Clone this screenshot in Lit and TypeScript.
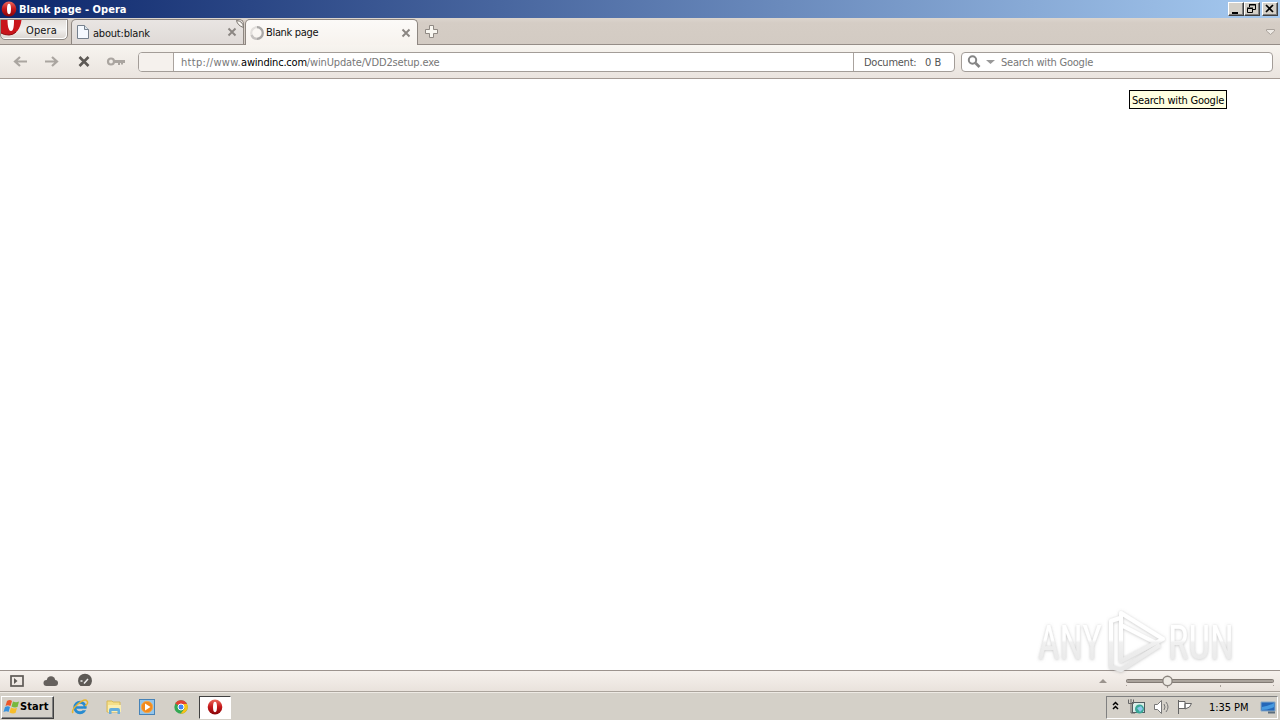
import { LitElement, html, css, svg } from "lit";
import { customElement } from "lit/decorators.js";

const operaMark = (id: string) => svg`
  <defs><linearGradient id=${id} x2="0" y2="1"><stop stop-color="#ee6a5c"/><stop offset=".5" stop-color="#c4171a"/><stop offset="1" stop-color="#860508"/></linearGradient></defs>
  <ellipse cx="8" cy="8" rx="7.3" ry="7.6" fill="url(#${id})"/>
  <ellipse cx="8" cy="8" rx="2" ry="5.2" fill="#fff"/>`;

@customElement("app-root")
export class AppRoot extends LitElement {
  static styles = css`
    :host { display: flex; flex-direction: column; width: 1280px; height: 720px; overflow: hidden; background: #fff; color: #111; font: 11px/14px "DejaVu Sans Condensed", "DejaVu Sans", sans-serif; font-stretch: condensed; white-space: nowrap; }
    * { box-sizing: border-box; }
    svg { display: block; flex: none; overflow: visible; }
    .title { height: 18px; flex: none; display: flex; align-items: center; padding: 0 2px 0 1px; background: linear-gradient(90deg, #0c266b, #a6caf0); color: #fff; }
    .title-text { font-weight: bold; margin-left: 2px; flex: 1; padding-top: 1px; letter-spacing: .03px; }
    .wbtn { width: 16px; height: 14px; background: #d4d0c8; border: 1px solid; border-color: #fff #404040 #404040 #fff; box-shadow: inset -1px -1px #808080; }
    .close { margin-left: 2px; }
    .tabs { height: 27px; flex: none; display: flex; background: linear-gradient(#dcd5ce, #d5cdc5 5px, #d3cbc3); border-bottom: 1px solid #958d87; }
    .menu { width: 68px; height: 21px; margin-top: 1px; display: flex; border: 1px solid #8f8984; border-radius: 0 0 5px 5px; background: linear-gradient(#e4e0dc, #f1efed 50%, #d9d4cf); box-shadow: inset -1px -1px #fff; }
    .menu-text { margin: 4px 0 0 4px; letter-spacing: .1px; }
    .tab { position: relative; display: flex; align-items: center; height: 26px; border: 1px solid #8e8781; border-bottom: 0; border-radius: 5px 5px 0 0; margin-top: 1px; }
    .inactive { width: 173px; margin-left: 3px; padding: 0 6px 0 5px; background: linear-gradient(#e9e5e3, #dfdad7); height: 25px; }
    .active { width: 173px; margin-left: 1px; padding: 1px 6px 0 4px; height: 26px; margin-bottom: -1px; align-items: flex-start; background: linear-gradient(#fcfaf8, #f7f3ee); }
    .active svg { margin-top: 5px; }
    .active .cross { margin-top: 7px; }
    .tab-text { flex: 1; padding-top: 3px; }
    .active .tab-text { padding-top: 5px; }
    .t1 { margin-left: 4px; letter-spacing: -.2px; }
    .t2 { margin-left: 2px; letter-spacing: -.33px; }
    .curl { position: absolute; right: -1px; top: 0; }
    .plus { margin: 7px 0 0 7px; }
    .down { margin: 11px 5px 0 auto; }
    .bar { height: 34px; flex: none; display: flex; padding: 7px 7px 0 13px; background: linear-gradient(#f7f4ef, #eae4df); border-bottom: 1px solid #a59b95; }
    .nav { margin-top: 3px; width: 125px; flex: none; }
    .address { width: 817px; height: 20px; display: flex; border: 1px solid #a39d98; border-radius: 4px; background: #fff; overflow: hidden; color: #777; }
    .badge { width: 35px; border-right: 1px solid #aaa39e; background: #f5f1ed; }
    .url { flex: 1; padding: 3px 0 0 7px; letter-spacing: -.15px; }
    .scheme { letter-spacing: .3px; }
    .host { color: #000; letter-spacing: -.2px; }
    .doc { width: 101px; border-left: 1px solid #aaa39e; padding: 3px 0 0 10px; color: #555; display: flex; }
    .doc-label { width: 61px; letter-spacing: -.25px; }
    .search { width: 312px; height: 20px; margin-left: 6px; display: flex; border: 1px solid #a39d98; border-radius: 4px; background: #fff; color: #777; padding-left: 5px; }
    .search-text { margin: 3px 0 0 5px; letter-spacing: -.23px; }
    .page { position: relative; flex: 1; background: #fff; }
    .tip { position: absolute; left: 1129px; top: 11px; width: 98px; height: 19px; border: 1px solid #000; background: #ffffe1; color: #000; padding: 3px 0 0 2px; letter-spacing: -.23px; }
    .mark { position: absolute; left: 1030px; top: 525px; font-family: Roboto, sans-serif; }
    .status { height: 22px; flex: none; display: flex; align-items: center; border-top: 1px solid #9c938e; border-bottom: 1px solid #aaa39c; background: linear-gradient(#f6f1ed, #e9e2dc); padding-left: 9px; }
    .zoom { margin-left: auto; }
    .task { height: 28px; flex: none; display: flex; align-items: center; background: #d4d0c8; border-top: 1px solid #eeeae4; padding: 2px 2px 1px 1px; }
    .start { width: 53px; height: 23px; display: flex; align-items: center; border: 1px solid; border-color: #fff #404040 #404040 #fff; box-shadow: inset -1px -1px #808080; padding-left: 1px; font-weight: bold; color: #000; letter-spacing: .1px; }
    .launch { margin-left: 17.5px; }
    .launch.first { margin-left: 18px; }
    .current { width: 32px; height: 23px; margin-left: 10px; padding: 2px 0 0 7px; border: 1px solid; border-color: #404040 #fff #fff #404040; background: #fff; }
    .tray { margin-left: auto; width: 172px; height: 23px; display: flex; align-items: center; border: 1px solid; border-color: #808080 #fff #fff #808080; color: #000; }
    .clock { width: 45px; margin-left: 12px; letter-spacing: -.05px; padding-top: 1px; }
    .desk { margin-left: 6px; }
  `;

  private cross() {
    return html`<svg class="cross" width="10" height="10"><path d="m1.500 1.500 7 7m0-7-7 7" stroke="#8b8682" stroke-width="1.900"/></svg>`;
  }

  render() {
    return html`
      <div class="title">
        <svg width="16" height="16" viewBox="0 0 16 16">${operaMark("a")}</svg>
        <span class="title-text">Blank page - Opera</span>
        <div class="wbtn"><svg width="14" height="12"><path d="M3 9h6v2H3z"/></svg></div>
        <div class="wbtn"><svg width="14" height="12"><path d="M4.500 4V1.500h6v5H8M4 2h7M2.500 5.500h5v4h-5zM2 5h6" fill="none" stroke="#000"/></svg></div>
        <div class="wbtn close"><svg width="14" height="12"><path d="m3 2 7 7m0-7-7 7" stroke="#000" stroke-width="1.700"/></svg></div>
      </div>
      <div class="tabs">
        <div class="menu">
          <svg width="21" height="18"><path d="M0 0h20.500c-1 8-5 15-12.500 15q-5 0-8-2z" fill="#c9151c"/><path d="M6.500 0h6.500c0 6-.5 11-3 11S6.500 6 6.500 0" fill="#fff"/><path d="M0 13q3 2 8 2 4 0 7-3" fill="none" stroke="#8e0b0f"/></svg>
          <span class="menu-text">Opera</span>
        </div>
        <div class="tab inactive">
          <svg width="12" height="14"><path d="M.5.5h7l4 4v9H.5z" fill="#f5f9ff" stroke="#75808d"/><path d="M7.500.5v4h4" fill="#dce5ed" stroke="#75808d"/></svg>
          <span class="tab-text t1">about:blank</span>${this.cross()}
          <svg class="curl" width="8" height="8"><path d="M.5.5q1 5 7 7Q7 1 .5.500" fill="#f8f6f2" stroke="#77716b"/></svg>
        </div>
        <div class="tab active">
          <svg width="14" height="14"><circle cx="7" cy="7" r="5.800" fill="none" stroke="#e2dfdc" stroke-width="2.200"/><path d="M7 1.200A5.800 5.800 0 0 1 7 12.800" fill="none" stroke="#aaa8a7" stroke-width="2.200"/><path d="M7 12.800A5.800 5.800 0 0 1 1.500 9" fill="none" stroke="#c5c2c0" stroke-width="2.200"/></svg>
          <span class="tab-text t2">Blank page</span>${this.cross()}
        </div>
        <svg class="plus" width="13" height="13"><path d="M4.500.5h4v4h4v4h-4v4h-4v-4h-4v-4h4z" fill="#f9f7f1" stroke="#8f8983"/></svg>
        <svg class="down" width="9" height="6"><path d="M.5.500h8v1.500L4.500 5.500.5 2z" fill="#eeeae5" stroke="#aaa39c"/></svg>
      </div>
      <div class="bar">
        <svg class="nav" width="125" height="14" fill="none">
          <path d="M14 6.500H2M7 2 2 6.500 7 11M32 6.500h12M39 2l5 4.500-5 4.500" stroke="#aaa5a0" stroke-width="2.200"/>
          <path d="m66.500 2 9 9m0-9-9 9" stroke="#5d5955" stroke-width="2.600"/>
          <circle cx="98" cy="6.500" r="3" stroke="#aaa5a0" stroke-width="2.200"/><path d="M101 6.500h11" stroke="#aaa5a0" stroke-width="3"/><path d="M106 7v3M109 7v2.500" stroke="#aaa5a0" stroke-width="2"/>
        </svg>
        <div class="address">
          <div class="badge"></div>
          <div class="url"><span class="scheme">http://www.</span><span class="host">awindinc.com</span>/winUpdate/VDD2setup.exe</div>
          <div class="doc"><span class="doc-label">Document:</span><span>0 B</span></div>
        </div>
        <div class="search">
          <svg width="29" height="18"><circle cx="5.500" cy="7" r="3.700" fill="none" stroke="#858585" stroke-width="2"/><path d="m8.500 10 4 4" stroke="#858585" stroke-width="2.600"/><path d="M19 7h9l-4.500 4z" fill="#999"/></svg>
          <span class="search-text">Search with Google</span>
        </div>
      </div>
      <div class="page">
        <div class="tip">Search with Google</div>
        <svg class="mark" width="220" height="76" viewBox="0 0 220 76">
          <defs>
            <filter id="shade" x="-10%" y="-10%" width="120%" height="130%"><feDropShadow dx="0" dy="0.500" stdDeviation="1.700" flood-color="#888" flood-opacity=".5"/></filter>
            <linearGradient id="fade" x1="0" y1="10" x2="0" y2="62" gradientUnits="userSpaceOnUse"><stop offset=".5" stop-color="#fff"/><stop offset=".55" stop-color="#f0f0f0"/><stop offset="1" stop-color="#e8e8e8"/></linearGradient>
          </defs>
          <g filter="url(#shade)" fill="url(#fade)">
            <text x="8" y="55" font-size="49" textLength="64" lengthAdjust="spacingAndGlyphs">ANY</text>
            <text x="138" y="55" font-size="49" textLength="66" lengthAdjust="spacingAndGlyphs">RUN</text>
            <path d="M91 9v48l42-22zM90 14l-9 3v46l10 3 39-25M91 21l35 18" fill="none" stroke="url(#fade)" stroke-width="4" stroke-linejoin="round"/>
          </g>
        </svg>
      </div>
      <div class="status">
        <svg width="90" height="14">
          <rect x="2" y="2" width="12" height="10" fill="none" stroke="#5e5a56" stroke-width="1.700"/><path d="m5 4 3.500 3L5 10z" fill="#5e5a56"/>
          <g fill="#65605d"><circle cx="37.500" cy="9" r="3"/><circle cx="42" cy="6.500" r="4.300"/><circle cx="46" cy="9" r="3"/><path d="M37.500 7h8.500v5h-8.500z"/></g>
          <path d="M71.500 12a7 7 0 1 1 9 0z" fill="#5e5a56"/><path d="m75 9.500 4-4.500M71.500 7h2" stroke="#eee" stroke-width="1.500"/>
        </svg>
        <svg class="zoom" width="184" height="20">
          <path d="m3 12 4-4 4 4z" fill="#9b948e"/><rect x="30.500" y="8.500" width="147" height="3" rx="1" fill="#aaa39c" stroke="#827a74"/>
          <path d="M30.500 14v1M71.500 14v3M124.500 14v2M177.500 14v1" stroke="#aaa39c"/><circle cx="71.500" cy="10" r="4.700" fill="#eeeae4" stroke="#8c857f" stroke-width="1.500"/>
        </svg>
      </div>
      <div class="task">
        <div class="start">
          <svg width="17" height="16"><path d="M4 2q3-2 5 0L7.500 7q-3-1.500-5 0z" fill="#ed572a"/><path d="M10 2.500q3 1.500 6 0L14.500 8q-3 1-6-.5z" fill="#77b83d"/><path d="M2 8q3-1.500 5 0l-1.500 5q-2-1.500-5 0z" fill="#3792de"/><path d="M8 8.500q3 1.500 6 .5l-1.500 5q-3 1-6-.5z" fill="#f7bd29"/></svg>
          <span>Start</span>
        </div>
        <svg class="launch first" width="16" height="16"><circle cx="8" cy="8.500" r="5.200" fill="none" stroke="#278bd0" stroke-width="3"/><path d="M4 8.500h10" stroke="#278bd0" stroke-width="2.500"/><path d="M11 10.500h5" stroke="#d4d0c8" stroke-width="1.500"/><path d="M1 14Q-1 11 6 5t9-3q2 2-2 5" fill="none" stroke="#e7b52f" stroke-width="1.500"/></svg>
        <svg class="launch" width="16" height="16"><path d="M1 2h5l1 1h7v10H1z" fill="#f5df88" stroke="#d7b958"/><path d="M2 6h13v7H2z" fill="#fbeeb0"/><path d="M3 15V11q0-2 2-2h7q2 0 2 2v4h-2.500v-3H5.500v3z" fill="#65aedc"/></svg>
        <svg class="launch" width="16" height="16"><rect x=".5" y=".5" width="15" height="15" fill="#94c5ea" stroke="#4783b7"/><circle cx="8" cy="8" r="5.700" fill="#f28a1c" stroke="#f0a951"/><path d="m6 4.500 5.500 3.500L6 11.500z" fill="#fff"/></svg>
        <svg class="launch" width="16" height="16"><circle cx="8" cy="8" r="6.700" fill="#34a853"/><path d="M8 8 2.200 4.600A6.700 6.700 0 0 1 14 5H8z" fill="#e34133"/><path d="M8 5h6A6.700 6.700 0 0 1 7.500 14.700l4-5z" fill="#fbc116"/><circle cx="8" cy="8" r="3" fill="#4285f4" stroke="#fff"/></svg>
        <div class="current"><svg width="16" height="16" viewBox="0 0 16 16">${operaMark("b")}</svg></div>
        <div class="tray">
          <svg width="90" height="20">
            <path d="m6 8 2.500-2.500L11 8M6 12l2.500-2.500L11 12" fill="none" stroke="#000" stroke-width="1.500"/>
            <rect x="25.500" y="5.500" width="12" height="10" fill="#d9eee9" stroke="#515b60"/><circle cx="32.500" cy="12" r="4.500" fill="#39a796"/><path d="M21.500 2.500v4h5v-4M24 7v9h4M24 2v4" fill="none" stroke="#666"/><path d="m30 11 4-2 2 3-3 3z" fill="#8ec6ee"/>
            <path d="M47.500 7.500h3l4-4v13l-4-4h-3z" fill="#fff" stroke="#777"/><path d="M57 7q2 3 0 6M59 5q4 5 0 10" fill="none" stroke="#777"/>
            <path d="M71.500 3v14M72 4.500h6v7h-6M78 6.500h6.500l-2 3.500-4.500 2z" fill="#fff" stroke="#666"/>
          </svg>
          <span class="clock">1:35 PM</span>
          <svg class="desk" width="16" height="16"><path d="M1 3h14v9H1z" fill="#2467b8" stroke="#86a9c7"/><path d="M2 8q7-1 12-4v4q-6 3-12 3z" fill="#479ae0"/><path d="M8 13.500h7" stroke="#5b6d7c" stroke-width="2"/></svg>
        </div>
      </div>`;
  }
}
